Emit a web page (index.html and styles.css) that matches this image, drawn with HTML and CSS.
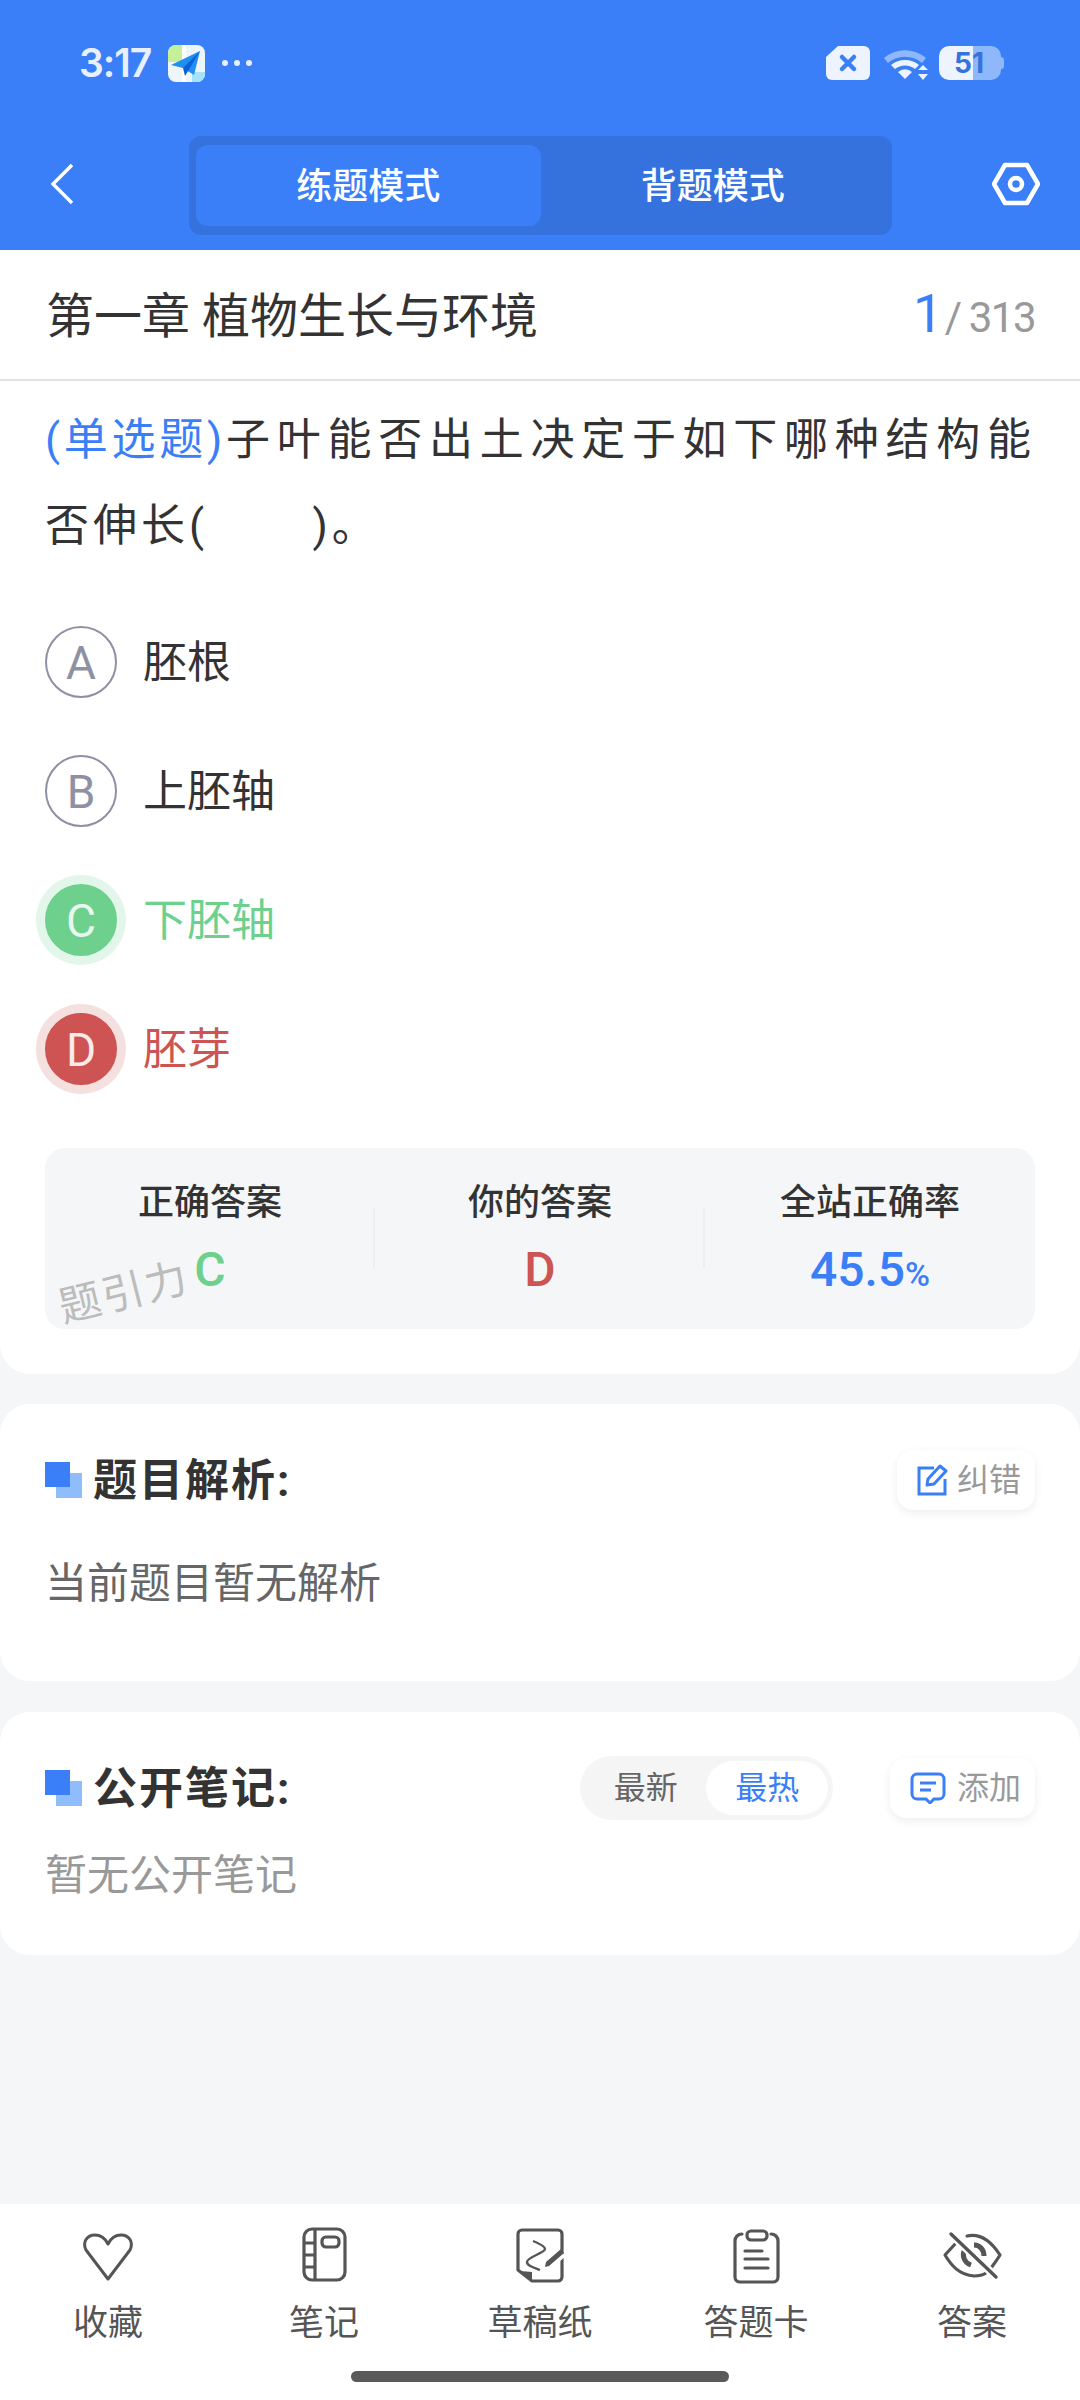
FILE: index.html
```html
<!DOCTYPE html>
<html lang="zh-CN">
<head>
  <meta charset="UTF-8" />
  <meta name="viewport" content="width=device-width, initial-scale=1.0"/>
  <title>练题模式</title>
  <link rel="stylesheet" href="styles.css">
</head>
<body>
  <div class="page">
    <header class="header">
      <div class="status">
        <div class="status-left">
          <span class="time">3:17</span>
          <svg class="app-icon" viewBox="0 0 37 37">
            <rect width="37" height="37" rx="8" fill="#eef5f8"/>
            <path d="M0 8a8 8 0 0 1 8-8h6v17H0z" fill="#c4f09a"/>
            <path d="M24 27h13v2a8 8 0 0 1-8 8h-5z" fill="#a6e3fb"/>
            <path d="M14 0h4v37h-4z" fill="#fff"/>
            <path d="M3 20 32 6 26 30 15 23z" fill="#1f8ff2"/>
            <path d="M15 23 32 6 17 31z" fill="#0d5fd6"/>
          </svg>
          <span class="dots"><i></i><i></i><i></i></span>
        </div>
        <div class="status-right">
          <svg class="sim" viewBox="0 0 44 34">
            <path d="M12 0h26a6 6 0 0 1 6 6v22a6 6 0 0 1-6 6H6a6 6 0 0 1-6-6V11z" fill="#edf3ff"/>
            <path d="M16 11 28 23M28 11 16 23" stroke="#3b7ff8" stroke-width="4.5" stroke-linecap="round"/>
          </svg>
          <svg class="wifi" viewBox="0 0 48 34">
            <path d="M2 12a32 32 0 0 1 42 0l-4 5a26 26 0 0 0-34 0z" fill="#8fb8fb"/>
            <path d="M9 19a22 22 0 0 1 28 0l-4 4a16 16 0 0 0-20 0z" fill="#edf3ff"/>
            <path d="M16 26a10 10 0 0 1 14 0l-7 7z" fill="#edf3ff"/>
            <path d="M41 19l5 5H36zM41 34l-5-6h10z" fill="#edf3ff"/>
          </svg>
          <div class="battery"><span class="battery-num">51</span></div>
        </div>
      </div>
      <div class="nav">
        <svg class="back" viewBox="0 0 24 42"><path d="M22 2 3 21l19 19" fill="none" stroke="#fff" stroke-width="3.4"/></svg>
        <div class="modes">
          <div class="mode mode-on">练题模式</div>
          <div class="mode">背题模式</div>
        </div>
        <svg class="setting" viewBox="0 0 48 44">
          <path d="M13 3h22l11 19-11 19H13L2 22z" fill="none" stroke="#fff" stroke-width="4.5" stroke-linejoin="round"/>
          <circle cx="24" cy="22" r="6" fill="none" stroke="#fff" stroke-width="4.5"/>
        </svg>
      </div>
    </header>

    <section class="card question-card">
      <div class="chapter">
        <div class="chapter-name">第一章 植物生长与环境</div>
        <div class="progress"><span class="progress-now">1</span><span class="progress-sep">/</span><span class="progress-all">313</span></div>
      </div>
      <div class="question">
        <p class="q-line q-line-full"><span class="q-type">(单选题)</span>子叶能否出土决定于如下哪种结构能</p>
        <p class="q-line">否伸长(&nbsp;&nbsp;&nbsp;&nbsp;&nbsp;&nbsp;&nbsp;)。</p>
      </div>
      <div class="options">
        <div class="option"><span class="letter">A</span><span class="option-text">胚根</span></div>
        <div class="option"><span class="letter">B</span><span class="option-text">上胚轴</span></div>
        <div class="option option-right"><span class="letter">C</span><span class="option-text">下胚轴</span></div>
        <div class="option option-wrong"><span class="letter">D</span><span class="option-text">胚芽</span></div>
      </div>
      <div class="stats">
        <div class="stat"><div class="stat-label">正确答案</div><div class="stat-value green">C</div></div>
        <div class="stat"><div class="stat-label">你的答案</div><div class="stat-value red">D</div></div>
        <div class="stat"><div class="stat-label">全站正确率</div><div class="stat-value blue">45.5<small>%</small></div></div>
        <div class="watermark">题引力</div>
      </div>
    </section>

    <section class="card analysis-card">
      <div class="section-head">
        <div class="section-title"><span class="squares"></span>题目解析:</div>
        <div class="small-btn">
          <svg viewBox="0 0 32 32"><path d="M17 4H2v26h26V15" fill="none" stroke="#3b7ff8" stroke-width="3"/><path d="M10 21l1-6L23 2l6 5-12 13z" fill="none" stroke="#3b7ff8" stroke-width="3" stroke-linejoin="round"/></svg>
          <span>纠错</span>
        </div>
      </div>
      <p class="analysis-text">当前题目暂无解析</p>
    </section>

    <section class="card notes-card">
      <div class="section-head">
        <div class="section-title"><span class="squares"></span>公开笔记:</div>
        <div class="head-right">
          <div class="toggle"><span class="toggle-item">最新</span><span class="toggle-item toggle-on">最热</span></div>
          <div class="small-btn small-btn-add">
            <svg viewBox="0 0 36 32"><path d="M7 2h22a5 5 0 0 1 5 5v15a5 5 0 0 1-5 5h-5l-4 4-4-4H7a5 5 0 0 1-5-5V7a5 5 0 0 1 5-5z" fill="none" stroke="#3b7ff8" stroke-width="3"/><path d="M10 11h16M10 18h11" stroke="#3b7ff8" stroke-width="3"/></svg>
            <span>添加</span>
          </div>
        </div>
      </div>
      <p class="notes-empty">暂无公开笔记</p>
    </section>

    <footer class="tabbar">
      <div class="tabs">
        <div class="tab">
          <svg viewBox="0 0 60 60"><path d="M30 53 8 24C4 16 9 9 17 9c6 0 10 3 13 9 3-6 7-9 13-9 8 0 13 7 9 15z" fill="none" stroke="#555" stroke-width="3" stroke-linejoin="round"/></svg>
          <span>收藏</span>
        </div>
        <div class="tab">
          <svg viewBox="0 0 60 60"><rect x="10" y="3" width="41" height="51" rx="8" fill="none" stroke="#555" stroke-width="3.2"/><path d="M21 3v51M10 17h11M10 29h11M10 41h11" fill="none" stroke="#555" stroke-width="3.2"/><rect x="28" y="11" width="17" height="10" rx="4" fill="none" stroke="#555" stroke-width="3.2"/></svg>
          <span>笔记</span>
        </div>
        <div class="tab">
          <svg viewBox="0 0 60 60"><path d="M22 55h26a4 4 0 0 0 4-4V8a4 4 0 0 0-4-4H12a4 4 0 0 0-4 4v36z" fill="none" stroke="#555" stroke-width="3.2" stroke-linejoin="round"/><path d="M10 45l12 1v9z" fill="#555"/><path d="M23 15c5 2 12 5 12 8 0 4-18 8-18 13 0 4 8 6 13 8" fill="none" stroke="#555" stroke-width="2.4"/><path d="M37 39l15-13" stroke="#fff" stroke-width="11"/><path d="M35 41l1-5 15-13 3 4-15 13z" fill="#555"/></svg>
          <span>草稿纸</span>
        </div>
        <div class="tab">
          <svg viewBox="0 0 60 60"><path d="M16 8c-4 0-7 3-7 7v36a5 5 0 0 0 5 5h33a5 5 0 0 0 5-5V15c0-4-3-7-7-7" fill="none" stroke="#555" stroke-width="3.2" stroke-linecap="round"/><rect x="21" y="5" width="20" height="9" rx="4" fill="none" stroke="#555" stroke-width="3.2"/><path d="M19 25h17M19 33h23M19 42h23" stroke="#555" stroke-width="3.2" stroke-linecap="round"/></svg>
          <span>答题卡</span>
        </div>
        <div class="tab">
          <svg viewBox="0 0 60 60"><path d="M14 17 3 29c6 10 14 20 29 21 5 0 9-1 12-3M25 10c13-3 24 5 33 19-3 5-6 9-9 13" fill="none" stroke="#555" stroke-width="3.2" stroke-linecap="round" stroke-linejoin="round"/><path d="M22 25c-2 6 1 12 7 14M32 19c6 0 10 5 10 11" fill="none" stroke="#555" stroke-width="5"/><path d="M9 8l45 43" stroke="#fff" stroke-width="8"/><path d="M9 8l45 43" stroke="#555" stroke-width="3.4" stroke-linecap="round"/></svg>
          <span>答案</span>
        </div>
      </div>
      <div class="home-bar"></div>
    </footer>
  </div>
</body>
</html>
```
FILE: styles.css
```css
html, body {
  margin: 0;
  padding: 0;
  background: #f5f6f8;
  font-family: Roboto, "Noto Sans CJK SC", sans-serif;
  line-height: 1.4;
  color: #333;
}
p {
  margin: 0;
}
.page {
  width: 1080px;
  height: 2400px;
  display: flex;
  flex-direction: column;
  overflow: hidden;
}

/* header */
.header {
  height: 250px;
  flex: none;
  background: #3b7ff8;
  box-sizing: border-box;
}
.status {
  height: 126px;
  display: flex;
  align-items: center;
  justify-content: space-between;
  padding: 0 79px 0 79px;
}
.status-left, .status-right {
  display: flex;
  align-items: center;
}
.time {
  font-family: Inter, sans-serif;
  font-size: 39px;
  font-weight: 600;
  color: #e8f0ff;
  letter-spacing: -1px;
}
.app-icon {
  width: 37px;
  height: 37px;
  margin-left: 17px;
}
.dots {
  display: flex;
  gap: 6px;
  margin-left: 17px;
}
.dots i {
  width: 6px;
  height: 6px;
  border-radius: 50%;
  background: #e8f0ff;
}
.sim {
  width: 44px;
  height: 34px;
}
.wifi {
  width: 48px;
  height: 34px;
  margin-left: 12px;
}
.battery {
  position: relative;
  width: 62px;
  height: 34px;
  margin-left: 9px;
  border-radius: 10px;
  background: linear-gradient(to right, #edf3ff 0, #edf3ff 34px, #8fb8fb 34px);
  font-family: Inter, sans-serif;
  font-size: 28px;
  font-weight: 700;
  color: #3672de;
  line-height: 34px;
  text-align: center;
}
.battery::after {
  content: "";
  position: absolute;
  right: -3px;
  top: 11px;
  width: 4px;
  height: 12px;
  border-radius: 0 3px 3px 0;
  background: #8fb8fb;
}
.battery-num {
  margin-left: -2px;
}
.nav {
  height: 99px;
  margin-top: 10px;
  display: flex;
  align-items: center;
  justify-content: space-between;
  padding: 0 40px 0 50px;
}
.back {
  width: 24px;
  height: 42px;
  margin-bottom: 3px;
}
.modes {
  width: 703px;
  height: 99px;
  box-sizing: border-box;
  padding: 9px 7px;
  display: flex;
  background: #3672de;
  border-radius: 12px;
  margin-left: 115px;
  margin-right: 100px;
}
.mode {
  flex: 1;
  display: flex;
  align-items: center;
  justify-content: center;
  padding-top: 3px;
  font-size: 36px;
  font-weight: 500;
  color: #fff;
  border-radius: 12px;
}
.mode-on {
  background: #3b7ff8;
}
.setting {
  width: 48px;
  height: 44px;
  flex: none;
  margin-bottom: 3px;
}

/* cards */
.card {
  background: #fff;
  border-radius: 30px;
  flex: none;
}
.question-card {
  height: 1124px;
  border-radius: 0 0 30px 30px;
  box-sizing: border-box;
}
.chapter {
  height: 131px;
  box-sizing: border-box;
  border-bottom: 2px solid #e2e2e2;
  display: flex;
  align-items: center;
  justify-content: space-between;
  padding: 0 45px 2px 46px;
}
.chapter-name {
  margin-top: 6px;
  font-size: 48px;
  color: #333;
}
.progress {
  display: flex;
  align-items: baseline;
  color: #999;
  font-size: 42px;
  letter-spacing: -1.5px;
}
.progress-now {
  font-size: 54px;
  color: #3b7ff8;
  margin-right: 3px;
}
.progress-sep {
  margin-right: 8px;
}
.question {
  margin: 16px 45px 0 45px;
  font-size: 44px;
  line-height: 86px;
  letter-spacing: 4px;
  color: #333;
}
.q-line-full {
  text-align: justify;
  text-align-last: justify;
}
.q-type {
  color: #3b7ff8;
  letter-spacing: 1px;
}
.options {
  display: flex;
  flex-direction: column;
  gap: 57px;
  margin: 57px 0 0 45px;
}
.option {
  display: flex;
  align-items: center;
  height: 72px;
}
.letter {
  width: 72px;
  height: 72px;
  box-sizing: border-box;
  padding-top: 3px;
  border: 2px solid #8e90a4;
  border-radius: 50%;
  display: flex;
  align-items: center;
  justify-content: center;
  font-size: 46px;
  color: #8e90a4;
}
.option-text {
  margin-left: 26px;
  padding-top: 3px;
  font-size: 44px;
  color: #333;
}
.option-right .letter {
  background: #6dd08c;
  border-color: #6dd08c;
  color: #e8f8ee;
  box-shadow: 0 0 0 9px #e3f6ea;
}
.option-right .option-text {
  color: #6dd08c;
}
.option-wrong .letter {
  background: #cd5452;
  border-color: #cd5452;
  color: #fbeaea;
  box-shadow: 0 0 0 9px #f5e0e0;
}
.option-wrong .option-text {
  color: #cd5452;
}
.stats {
  position: relative;
  height: 181px;
  margin: 63px 45px 0;
  background: #f5f6f8;
  border-radius: 20px;
  display: grid;
  grid-template-columns: repeat(3, 1fr);
}
.stat {
  display: flex;
  flex-direction: column;
  align-items: center;
  padding-top: 29px;
  position: relative;
}
.stat + .stat::before {
  content: "";
  position: absolute;
  left: -2px;
  top: 60px;
  height: 60px;
  width: 2px;
  background: #eceef1;
}
.stat-label {
  font-size: 36px;
  font-weight: 500;
  line-height: 52px;
  color: #333;
}
.stat-value {
  font-size: 48px;
  font-weight: 500;
  line-height: 60px;
  margin-top: 11px;
}
.stat-value small {
  font-size: 34px;
  font-weight: 500;
}
.green { color: #6dd08c; }
.red { color: #cd5452; }
.blue { color: #3b7ff8; }
.watermark {
  position: absolute;
  left: 13px;
  top: 120px;
  font-size: 42px;
  line-height: 50px;
  letter-spacing: 2px;
  color: #bcbcbc;
  transform: rotate(-14deg);
}
.analysis-card {
  height: 277px;
  margin-top: 30px;
  box-sizing: border-box;
  padding: 45px 45px 0;
}
.notes-card {
  height: 243px;
  margin-top: 31px;
  box-sizing: border-box;
  padding: 45px 45px 0;
}
.section-head {
  display: flex;
  align-items: center;
  justify-content: space-between;
  height: 62px;
}
.section-title {
  display: flex;
  align-items: center;
  padding-top: 3px;
  font-size: 44px;
  font-weight: 700;
  color: #333;
  letter-spacing: 2px;
}
.squares {
  position: relative;
  width: 37px;
  height: 36px;
  margin-right: 11px;
  margin-top: -3px;
  background: linear-gradient(#8fbcfb, #8fbcfb) 11px 11px / 26px 25px no-repeat;
}
.squares::before {
  content: "";
  position: absolute;
  left: 0;
  top: 0;
  width: 25px;
  height: 25px;
  background: #3b7ff8;
}
.small-btn {
  height: 60px;
  box-sizing: border-box;
  padding: 0 14px 0 20px;
  display: flex;
  align-items: center;
  gap: 8px;
  background: #fff;
  border-radius: 16px;
  box-shadow: 0 3px 10px rgba(0, 0, 0, 0.07);
  font-size: 32px;
  color: #999;
}
.small-btn svg {
  width: 32px;
  height: 32px;
}
.small-btn-add {
  padding-left: 20px;
  gap: 11px;
}
.small-btn-add svg {
  width: 36px;
}
.analysis-text {
  margin-top: 43px;
  font-size: 42px;
  line-height: 60px;
  color: #666;
}
.head-right {
  display: flex;
  align-items: center;
  gap: 57px;
}
.toggle {
  height: 64px;
  width: 253px;
  box-sizing: border-box;
  padding: 5px;
  display: flex;
  background: #f5f5f5;
  border-radius: 32px;
  font-size: 32px;
  color: #666;
}
.toggle-item {
  flex: 1;
  display: flex;
  align-items: center;
  justify-content: center;
  border-radius: 27px;
}
.toggle-on {
  background: #fff;
  color: #3b7ff8;
}
.notes-empty {
  margin-top: 27px;
  font-size: 42px;
  line-height: 60px;
  color: #999;
}

/* bottom bar */
.tabbar {
  margin-top: auto;
  height: 196px;
  box-sizing: border-box;
  background: #fff;
  padding-top: 22px;
  flex: none;
}
.tabs {
  display: grid;
  grid-template-columns: repeat(5, 1fr);
}
.tab {
  display: flex;
  flex-direction: column;
  align-items: center;
}
.tab svg {
  width: 60px;
  height: 60px;
}
.tab span {
  margin-top: 15px;
  font-size: 35px;
  line-height: 46px;
  color: #555;
}
.home-bar {
  width: 378px;
  height: 11px;
  margin: 24px auto 0;
  border-radius: 6px;
  background: #5a5a5a;
}
```
